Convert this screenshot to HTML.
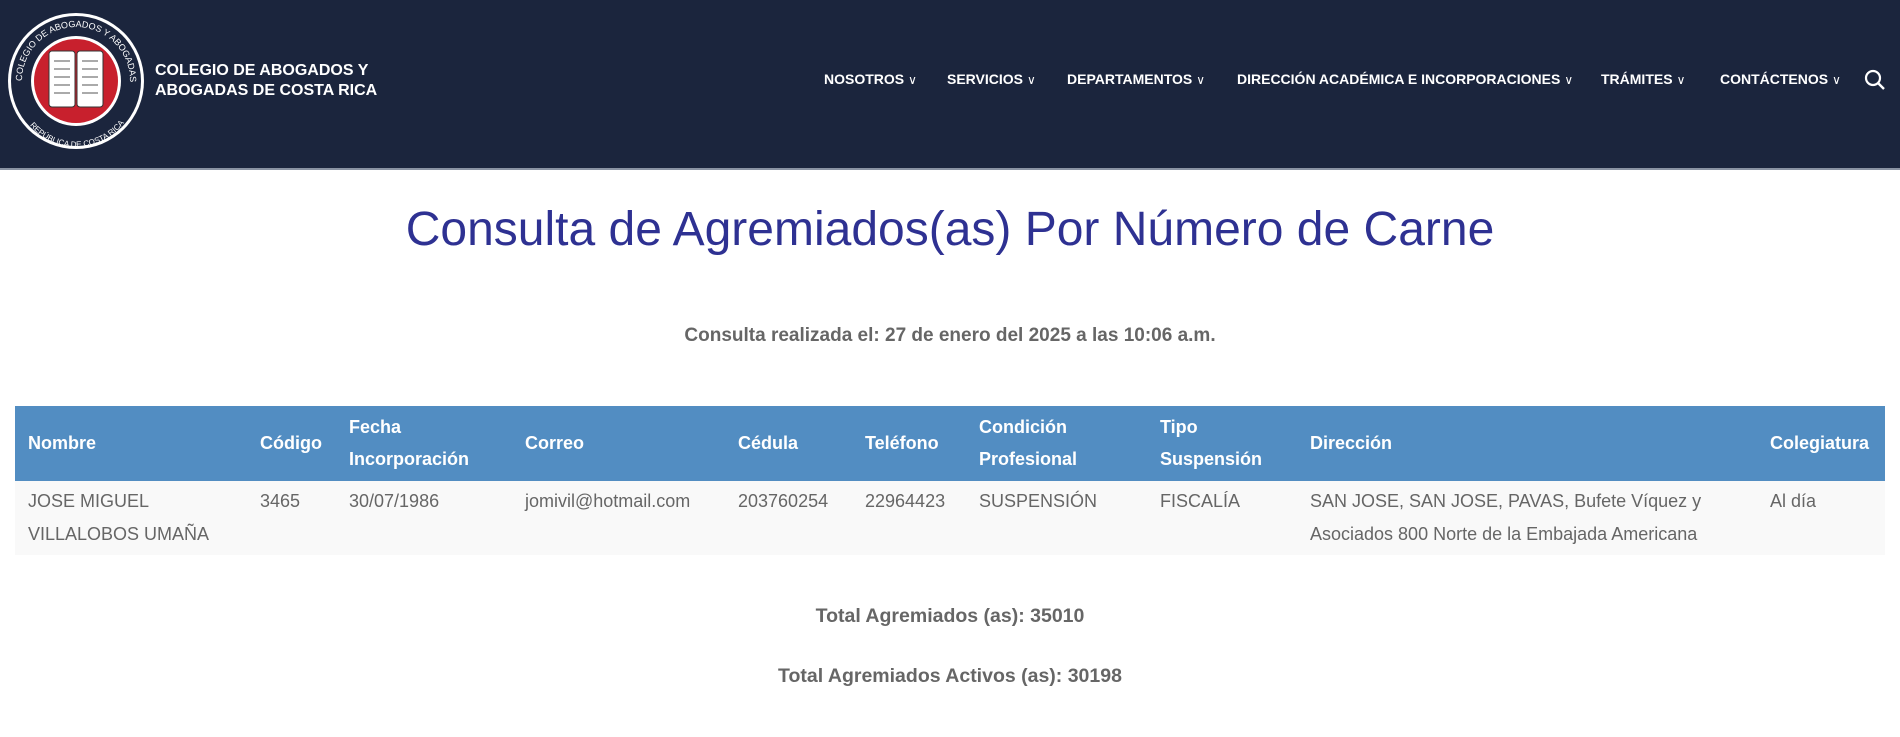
<!DOCTYPE html>
<html><head><meta charset="utf-8"><style>
body{margin:0;width:1900px;height:737px;background:#fff;font-family:"Liberation Sans",sans-serif;position:relative;overflow:hidden}
.hd{position:absolute;left:0;top:0;width:1900px;height:170px;background:#1b253d;border-bottom:2px solid #8a93a3;box-sizing:border-box}
.a{position:absolute;white-space:nowrap}
.nav{top:71px;color:#fff;font-weight:bold;font-size:14px}
.nav span{font-weight:normal;font-size:12px;margin-left:4px}
.th{position:absolute;left:15px;top:406px;width:1870px;height:75px;background:#528dc2}
.tr{position:absolute;left:15px;top:481px;width:1870px;height:74px;background:#f9f9f9}
.h{color:#fff;font-weight:bold;font-size:18px;line-height:32px}
.c{color:#666;font-size:18px;line-height:33px;top:485px}
</style></head><body>
<div class="hd"></div>
<svg class="a" style="left:6px;top:11px" width="140" height="140" viewBox="0 0 140 140">
<defs><path id="ar" d="M16 70a54 54 0 0 1 108 0"/><path id="ar2" d="M10 76a60 60 0 0 0 120 0"/></defs>
<circle cx="70" cy="70" r="68" fill="#fff"/><circle cx="70" cy="70" r="65" fill="#1b253d"/>
<text font-size="9" fill="#fff" font-family="Liberation Sans"><textPath href="#ar">COLEGIO DE ABOGADOS Y ABOGADAS</textPath></text>
<circle cx="70" cy="70" r="45" fill="#fff"/><circle cx="70" cy="70" r="42" fill="#c8202d"/>
<text font-size="8" fill="#fff" font-family="Liberation Sans"><textPath href="#ar2" startOffset="22%">REPÚBLICA DE COSTA RICA</textPath></text>
<rect x="43" y="40" width="26" height="56" fill="#fff" stroke="#333" stroke-width="1" rx="3"/>
<rect x="71" y="40" width="26" height="56" fill="#fff" stroke="#333" stroke-width="1" rx="3"/>
<g stroke="#555" stroke-width="1"><path d="M48 50h16M48 58h16M48 66h16M48 74h16M48 82h16M76 50h16M76 58h16M76 66h16M76 74h16M76 82h16"/></g>
</svg>
<div class="a" style="left:155px;top:61px;color:#fff;font-weight:bold;font-size:16px;line-height:20px">COLEGIO DE ABOGADOS Y<br>ABOGADAS DE COSTA RICA</div>
<div class="a nav" style="left:824px">NOSOTROS<span>∨</span></div>
<div class="a nav" style="left:947px">SERVICIOS<span>∨</span></div>
<div class="a nav" style="left:1067px">DEPARTAMENTOS<span>∨</span></div>
<div class="a nav" style="left:1237px">DIRECCIÓN ACADÉMICA E INCORPORACIONES<span>∨</span></div>
<div class="a nav" style="left:1601px">TRÁMITES<span>∨</span></div>
<div class="a nav" style="left:1720px">CONTÁCTENOS<span>∨</span></div>
<svg class="a" style="left:1864px;top:69px" width="22" height="22" viewBox="0 0 22 22"><circle cx="9" cy="9" r="7" fill="none" stroke="#fff" stroke-width="2.2"/><path d="M14 14l6 6" stroke="#fff" stroke-width="2.4"/></svg>
<div class="a" style="left:0;width:1900px;text-align:center;top:202px;font-size:48px;color:#2e3192">Consulta de Agremiados(as) Por Número de Carne</div>
<div class="a" style="left:0;width:1900px;text-align:center;top:325px;font-size:19px;font-weight:bold;color:#666">Consulta realizada el: 27 de enero del 2025 a las 10:06 a.m.</div>
<div class="th"></div><div class="tr"></div>
<div class="a h" style="left:28px;top:427px">Nombre</div>
<div class="a h" style="left:260px;top:427px">Código</div>
<div class="a h" style="left:349px;top:411px">Fecha<br>Incorporación</div>
<div class="a h" style="left:525px;top:427px">Correo</div>
<div class="a h" style="left:738px;top:427px">Cédula</div>
<div class="a h" style="left:865px;top:427px">Teléfono</div>
<div class="a h" style="left:979px;top:411px">Condición<br>Profesional</div>
<div class="a h" style="left:1160px;top:411px">Tipo<br>Suspensión</div>
<div class="a h" style="left:1310px;top:427px">Dirección</div>
<div class="a h" style="left:1770px;top:427px">Colegiatura</div>
<div class="a c" style="left:28px">JOSE MIGUEL<br>VILLALOBOS UMAÑA</div>
<div class="a c" style="left:260px">3465</div>
<div class="a c" style="left:349px">30/07/1986</div>
<div class="a c" style="left:525px">jomivil@hotmail.com</div>
<div class="a c" style="left:738px">203760254</div>
<div class="a c" style="left:865px">22964423</div>
<div class="a c" style="left:979px">SUSPENSIÓN</div>
<div class="a c" style="left:1160px">FISCALÍA</div>
<div class="a c" style="left:1310px">SAN JOSE, SAN JOSE, PAVAS, Bufete Víquez y<br>Asociados 800 Norte de la Embajada Americana</div>
<div class="a c" style="left:1770px">Al día</div>
<div class="a" style="left:0;width:1900px;text-align:center;top:605px;font-size:19.5px;font-weight:bold;color:#666">Total Agremiados (as): 35010</div>
<div class="a" style="left:0;width:1900px;text-align:center;top:665px;font-size:19.5px;font-weight:bold;color:#666">Total Agremiados Activos (as): 30198</div>
</body></html>
